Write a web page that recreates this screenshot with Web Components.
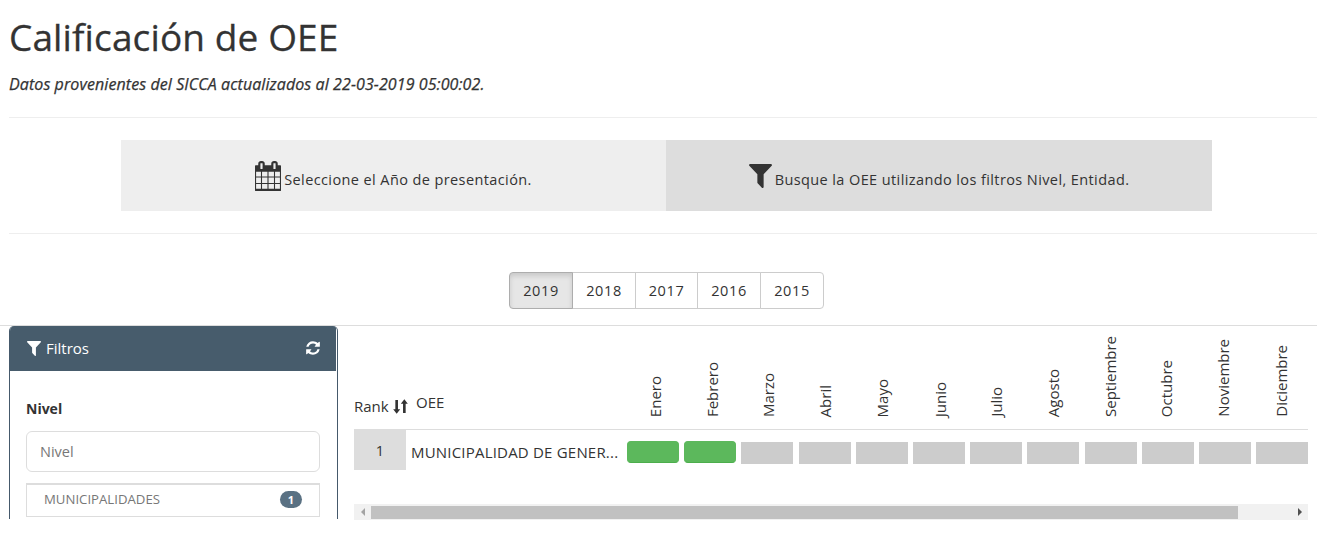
<!DOCTYPE html>
<html lang="es"><head><meta charset="utf-8"><title>Calificación de OEE</title>
<style>
html,body{margin:0;padding:0;background:#fff;overflow:hidden}
body{font-family:"Open Sans",sans-serif;color:#333;font-size:14px;height:542px}
</style></head><body>
<oee-page></oee-page>
<template id="t-page"><style>
:host{display:block;width:1317px;height:520px;overflow:hidden;box-sizing:border-box}
.top{padding:0 0 0 9px}
h1{margin:0;font-size:37px;line-height:42px;font-weight:400;padding-top:16px;color:#333;-webkit-text-stroke:.3px #333;letter-spacing:.12px}
.sub{margin:0;padding-top:16px;font-size:16px;line-height:20px;font-style:italic;font-weight:400;color:#333;height:22px;letter-spacing:.09px;-webkit-text-stroke:.25px #333}
hr{border:0;border-top:1px solid #eee;margin:0}
.h1{margin-top:21px}
.steps{display:flex;margin:22px 105px 22px 112px;height:71px}
.yrs{display:flex;justify-content:center;margin:38px 0 16px;padding-left:7px}
.rule{border-top:1px solid #ddd;margin-left:-9px}
.main{display:flex;align-items:flex-start;gap:16px}
</style>
<div class="top">
<h1>Calificación de OEE</h1>
<p class="sub">Datos provenientes del SICCA actualizados al 22-03-2019 05:00:02.</p>
<hr class="h1">
<div class="steps">
<step-box bg="#eee" w="545" kind="cal">Seleccione el Año de presentación.</step-box>
<step-box bg="#ddd" w="546" kind="fil">Busque la OEE utilizando los filtros Nivel, Entidad.</step-box>
</div>
<hr>
<div class="yrs"><year-group></year-group></div>
<hr class="rule">
<div class="main"><filter-panel></filter-panel><rank-table></rank-table></div>
</div>
</template>

<template id="t-step"><style>
:host{display:flex;align-items:center;justify-content:center;font-size:14.5px;letter-spacing:.4px;color:#333;box-sizing:border-box;height:71px}
svg{display:block;fill:#333;flex:none}
.w{display:flex;align-items:center;gap:3px}
.x{line-height:19px;padding-top:7px}
</style><div class="w"><span id="i"></span><span class="x"><slot></slot></span></div></template>

<template id="t-yrs"><style>
:host{display:flex;font-size:14.5px;letter-spacing:.6px}
button{font:inherit;letter-spacing:inherit;color:#333;background:#fff;border:1px solid #ccc;margin-left:-1px;height:37px;padding:0;box-sizing:border-box}
button:first-of-type{margin-left:0;border-radius:4px 0 0 4px;background:#e6e6e6;border-color:#adadad;box-shadow:inset 0 3px 5px rgba(0,0,0,.125);width:64px;position:relative}
button:last-of-type{border-radius:0 4px 4px 0}
</style><button>2019</button><button style="width:64px">2018</button><button style="width:63px">2017</button><button style="width:64px">2016</button><button style="width:64px">2015</button></template>

<template id="t-panel"><style>
:host{display:block;width:329px;height:193px;flex:none;box-sizing:border-box;overflow:hidden;border-radius:5px 5px 0 0;border-left:1px solid #45596b;border-right:1px solid #45596b}
.hd{height:45px;box-sizing:border-box;background:#475c6c;color:#fff;display:flex;align-items:center;justify-content:space-between;padding:0 15px 1px 17px;font-size:15px;margin-right:1px}
.hd svg{fill:#fff;display:block}
.t{display:flex;align-items:center;gap:5px}
.bd{padding:28px 17px 0 16px}
label{display:block;font-weight:700;font-size:14px;line-height:19px;color:#333}
.in{margin-top:13px;height:41px;box-sizing:border-box;border:1px solid #ddd;border-radius:6px;padding:0 13px;display:flex;align-items:center;color:#777;font-size:14.5px;background:#fff}
.it{margin-top:11px;height:34px;box-sizing:border-box;border:1px solid #ddd;border-top-width:2px;display:flex;align-items:center;justify-content:space-between;padding:0 17px 3px;color:#777;font-size:13.2px}
.bg{background:#5a7183;color:#fff;border-radius:10px;font-size:11px;font-weight:700;width:22px;height:17px;display:flex;align-items:center;justify-content:center}
</style>
<div class="hd"><div class="t"><svg width="14" height="15" viewBox="192 256 1408 1408" preserveAspectRatio="none"><path d="M1595 295q17 41-14 70l-493 493v742q0 42-39 59-13 5-25 5-27 0-45-19l-256-256q-19-19-19-45v-486l-493-493q-31-29-14-70 17-39 59-39h1280q42 0 59 39z"/></svg>Filtros</div>
<svg width="16" height="16" viewBox="0 0 1792 1792"><path d="M1639 1056q0 5-1 7-64 268-268 434.500t-478 166.500q-146 0-282.500-55t-243.500-157l-129 129q-19 19-45 19t-45-19-19-45v-448q0-26 19-45t45-19h448q26 0 45 19t19 45-19 45l-137 137q71 66 161 102t187 36q134 0 250-65t186-179q11-17 53-117 8-23 30-23h192q13 0 22.500 9.500t9.500 22.500zm25-800v448q0 26-19 45t-45 19h-448q-26 0-45-19t-19-45 19-45l138-138q-148-137-349-137-134 0-250 65t-186 179q-11 17-53 117-8 23-30 23h-199q-13 0-22.500-9.500t-9.500-22.500v-7q65-268 270-434.500t480-166.500q146 0 284 55.500t245 156.500l130-129q19-19 45-19t45 19 19 45z"/></svg></div>
<div class="bd"><label>Nivel</label><div class="in">Nivel</div><div class="it"><span>MUNICIPALIDADES</span><span class="bg">1</span></div></div>
</template>

<template id="t-table"><style>
:host{display:block;width:954px;font-size:15px;color:#333;flex:none}
.clip{overflow:hidden;height:178px}
.g{display:grid;grid-template-columns:52px 221px repeat(12,57.2px);width:959.4px}
.hc{height:104px;border-bottom:1px solid #ddd;box-sizing:border-box}
.m{display:flex;align-items:flex-end;justify-content:center;padding-right:5px;padding-bottom:12px}
.m span{writing-mode:vertical-rl;transform:translateX(var(--dx)) rotate(180deg);line-height:19px;white-space:nowrap}
.rk{display:flex;align-items:flex-end;padding-bottom:13px;white-space:nowrap;gap:4px}
.rk svg{display:block;margin-bottom:2px;flex:none}
.oe{display:flex;align-items:flex-end;padding-bottom:17px;padding-left:10px}
.n{background:#ddd;height:40px;display:flex;align-items:center;justify-content:center;font-size:14.5px}
.name{height:40px;display:flex;align-items:center;padding:3px 0 0 5px;box-sizing:border-box;white-space:nowrap;letter-spacing:.2px}
.c{padding:12px 5.2px 0 0;box-sizing:border-box;height:40px}
.c i{display:block;height:22px;background:#ccc}
.c.ok i{background:#5cb85c;border:1px solid #5cb85c;border-bottom-color:#4cae4c;border-radius:4px;box-sizing:border-box;margin-top:-1px}
.sb{height:16px;background:#f1f1f1;display:flex;align-items:flex-start}
.ar{width:17px;height:16px;display:flex;align-items:center;justify-content:center;flex:none}
.ar b{display:block;width:0;height:0;border:4px solid transparent}
.th{height:13px;background:#c1c1c1;width:867px;flex:none;margin:2px auto 0 0}
</style>
<div class="clip"><div class="g" id="g"></div></div>
<div class="sb"><div class="ar"><b style="border-right-color:#a3a3a3;border-left-width:0"></b></div><div class="th"></div><div class="ar"><b style="border-left-color:#505050;border-right-width:0"></b></div></div>
</template>

<script>
const tpl=(id,host)=>{const r=host.attachShadow({mode:"open"});r.appendChild(document.getElementById(id).content.cloneNode(true));return r};
customElements.define("oee-page",class extends HTMLElement{constructor(){super();tpl("t-page",this)}});
const ICONS={
cal:'<svg width="26" height="30" viewBox="128 0 1536 1792" preserveAspectRatio="none"><path d="M192 1664h288v-288h-288v288zm352 0h320v-288h-320v288zm-352-352h288v-320h-288v320zm352 0h320v-320h-320v320zm-352-384h288v-288h-288v288zm736 736h320v-288h-320v288zm-384-736h320v-288h-320v288zm768 736h288v-288h-288v288zm-384-352h320v-320h-320v320zm-352-864v-288q0-13-9.500-22.500t-22.500-9.500h-64q-13 0-22.500 9.500t-9.500 22.500v288q0 13 9.500 22.500t22.500 9.500h64q13 0 22.500-9.500t9.500-22.500zm736 864h288v-320h-288v320zm-384-384h320v-288h-320v288zm384 0h288v-288h-288v288zm32-480v-288q0-13-9.500-22.500t-22.500-9.500h-64q-13 0-22.500 9.500t-9.500 22.500v288q0 13 9.500 22.500t22.500 9.500h64q13 0 22.500-9.500t9.500-22.500zm384-64v1280q0 52-38 90t-90 38h-1408q-52 0-90-38t-38-90v-1280q0-52 38-90t90-38h128v-96q0-66 47-113t113-47h64q66 0 113 47t47 113v96h384v-96q0-66 47-113t113-47h64q66 0 113 47t47 113v96h128q52 0 90 38t38 90z"/></svg>',
fil:'<svg width="23" height="24" viewBox="192 256 1408 1408" preserveAspectRatio="none"><path d="M1595 295q17 41-14 70l-493 493v742q0 42-39 59-13 5-25 5-27 0-45-19l-256-256q-19-19-19-45v-486l-493-493q-31-29-14-70 17-39 59-39h1280q42 0 59 39z"/></svg>'};
customElements.define("step-box",class extends HTMLElement{constructor(){super();this.r=tpl("t-step",this)}
connectedCallback(){this.style.background=this.getAttribute("bg");this.style.width=this.getAttribute("w")+"px";this.r.getElementById("i").innerHTML=ICONS[this.getAttribute("kind")];}});
customElements.define("year-group",class extends HTMLElement{constructor(){super();tpl("t-yrs",this)}});
customElements.define("filter-panel",class extends HTMLElement{constructor(){super();tpl("t-panel",this)}});
customElements.define("rank-table",class extends HTMLElement{constructor(){super();const r=tpl("t-table",this);
const ms=["Enero","Febrero","Marzo","Abril","Mayo","Junio","Julio","Agosto","Septiembre","Octubre","Noviembre","Diciembre"];
let h='<div class="hc rk">Rank <svg width="15" height="15" viewBox="0 0 16 16" fill="#333"><path d="M2.500 1h2.800v10h2.400L3.900 15.800 .2 11h2.300zM10.700 15V5H8.300L12.100 .2 15.800 5h-2.300v10z"/></svg></div><div class="hc oe">OEE</div>';
ms.forEach((m,i)=>h+=`<div class="hc m"><span style="--dx:${(2-i*0.28).toFixed(2)}px">${m}</span></div>`);
h+='<div class="n">1</div><div class="name">MUNICIPALIDAD DE GENER...</div>';
ms.forEach((m,i)=>h+=`<div class="c${i<2?" ok":""}"><i></i></div>`);
r.getElementById("g").innerHTML=h;}});
</script>
</body></html>
